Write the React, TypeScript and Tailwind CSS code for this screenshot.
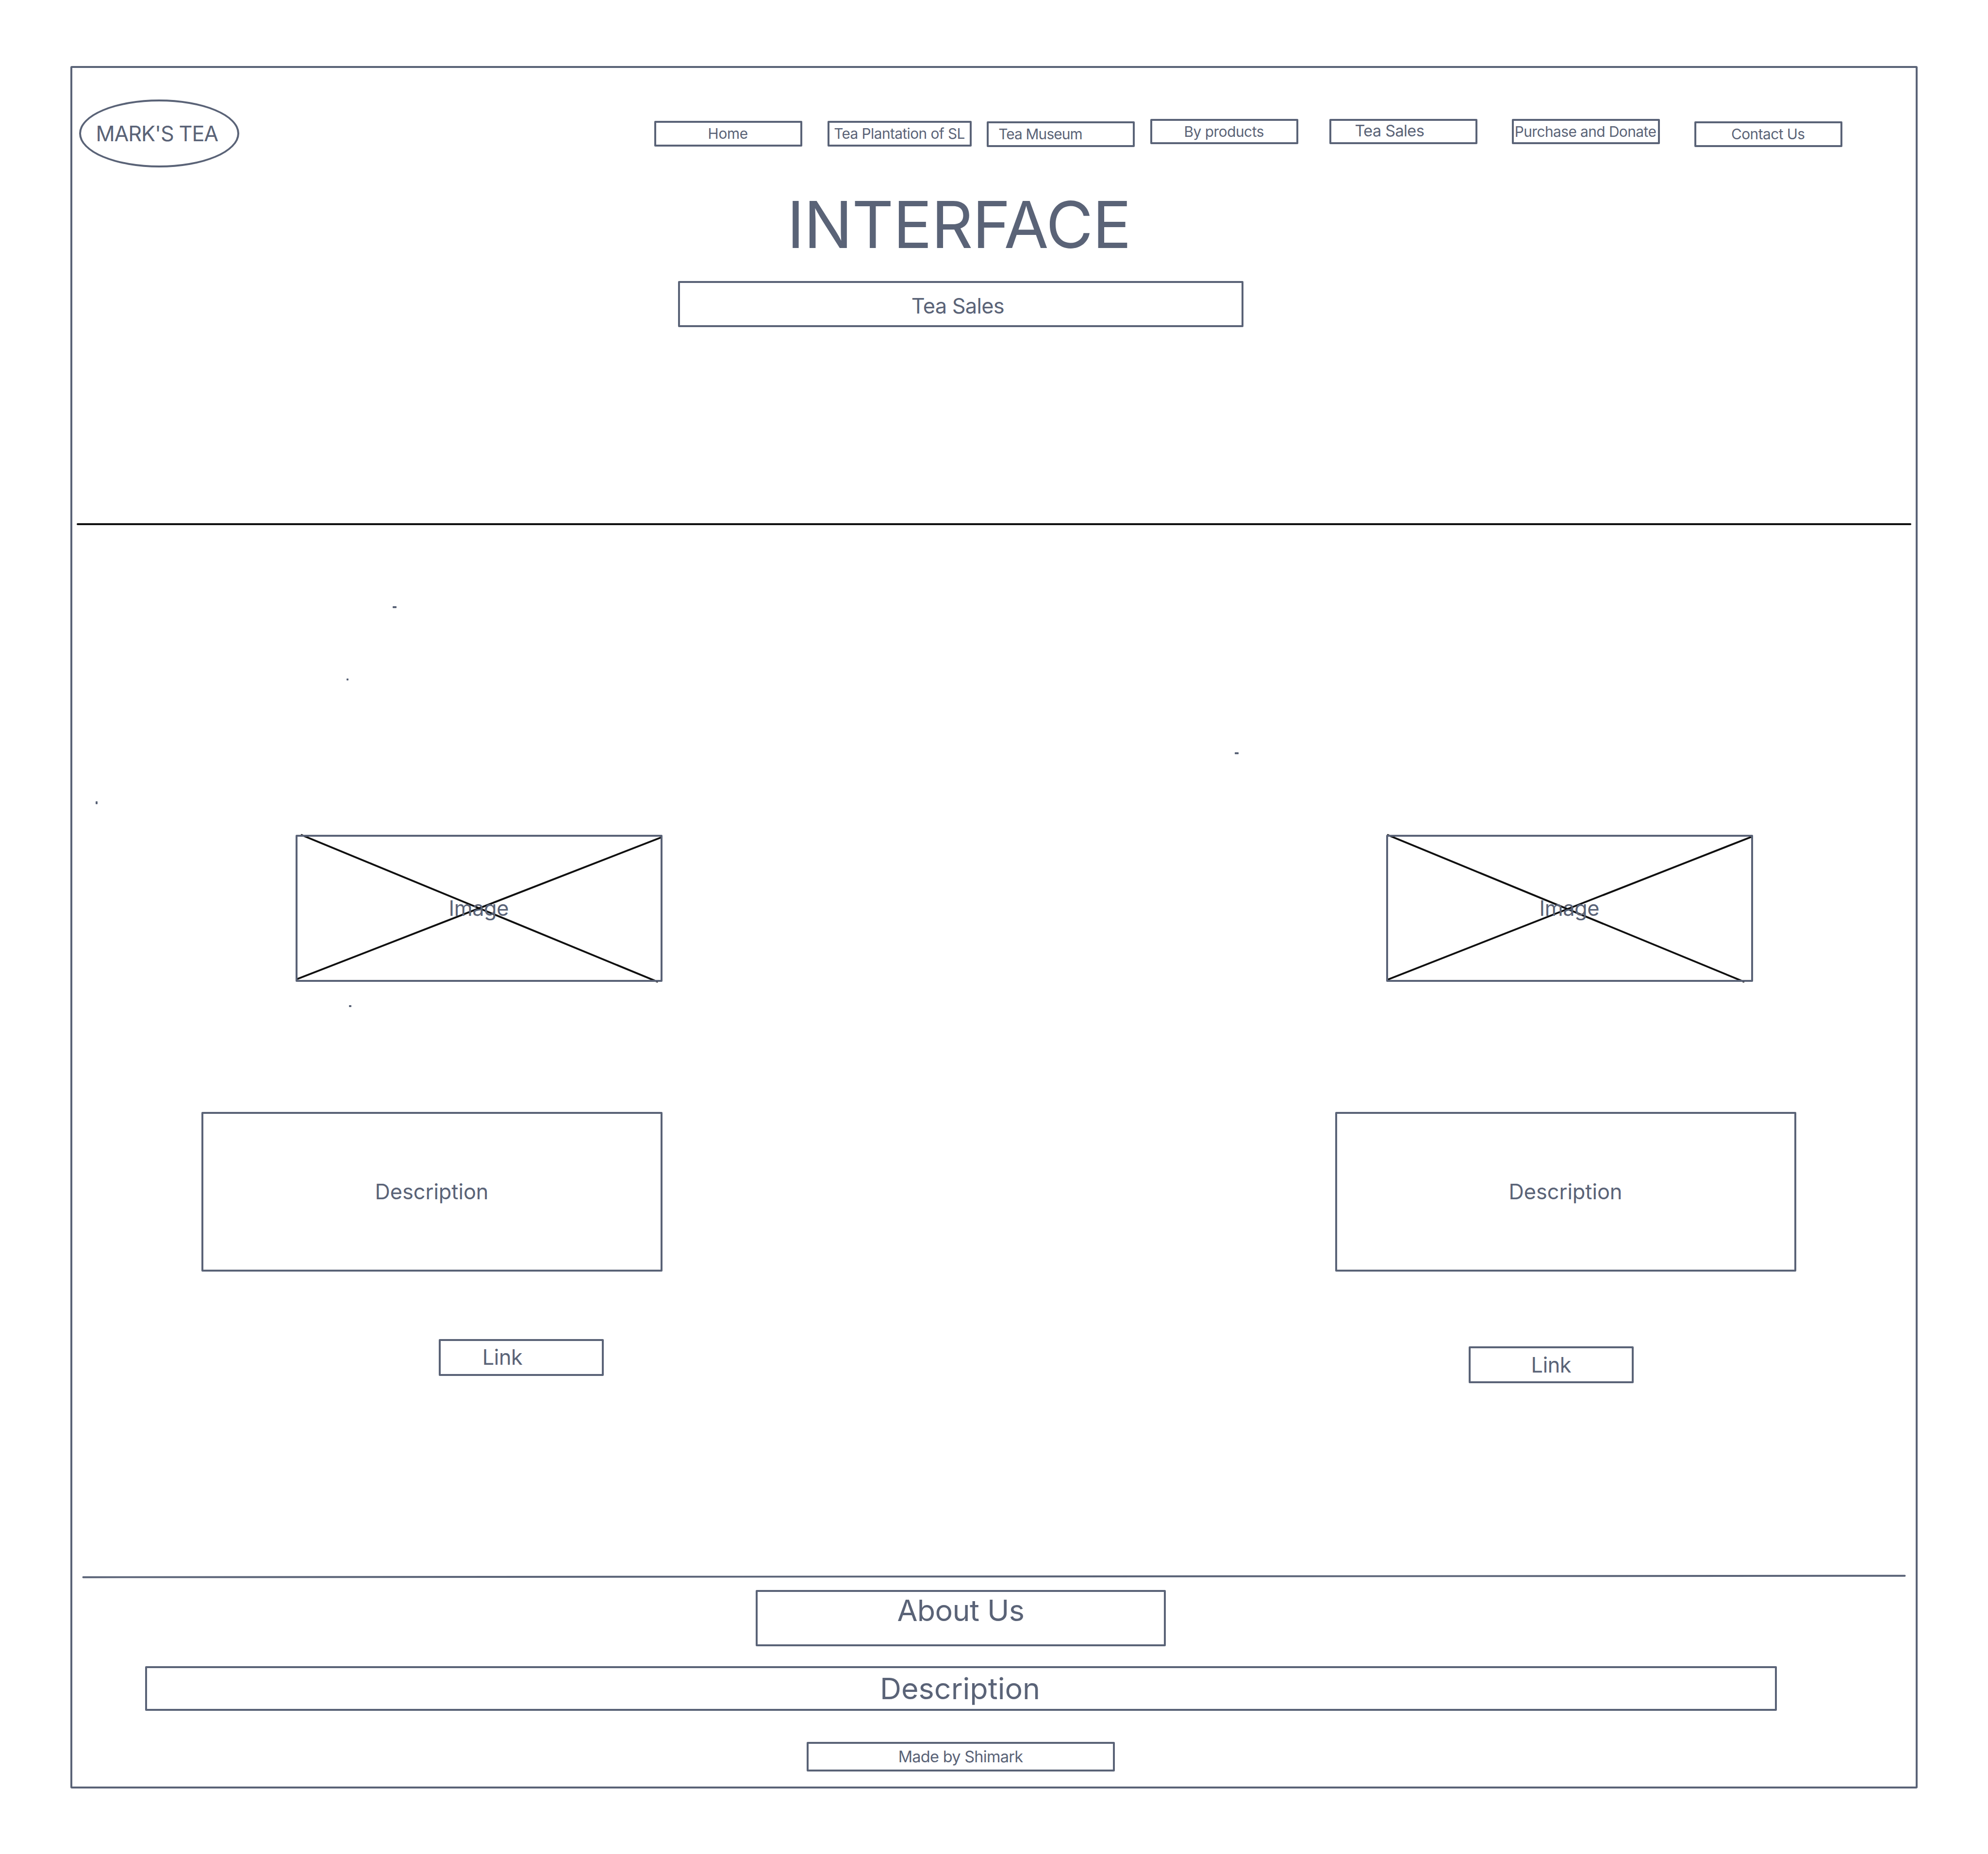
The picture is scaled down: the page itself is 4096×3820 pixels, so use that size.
import type { ReactNode } from "react";

function Box({ className, children }: { className: string; children?: ReactNode }) {
  return (
    <div className={`flex shrink-0 items-start rounded-[2px] border-4 border-[#5a6377] pl-px ${className}`}>
      {children}
    </div>
  );
}

const nav = [
  { label: "Home", box: "mt-[109px] h-[53px] w-[305px]", text: "mt-[7px] ml-[105.6px] text-[29.8px] leading-[30px] tracking-[-0.012em]" },
  { label: "Tea Plantation of SL", box: "mt-[109px] ml-[52px] h-[53px] w-[297px]", text: "mt-[7px] ml-[8.2px] text-[29.8px] leading-[30px] tracking-[-0.019em]" },
  { label: "Tea Museum", box: "mt-[110px] ml-[31px] h-[53px] w-[305px]", text: "mt-[7px] ml-[19.2px] text-[29.8px] leading-[30px] tracking-[-0.028em]" },
  { label: "By products", box: "mt-[105px] ml-[32px] h-[52px] w-[305px]", text: "mt-[7px] ml-[64.6px] text-[29.8px] leading-[30px] tracking-[-0.016em]" },
  { label: "Tea Sales", box: "mt-[105px] ml-[64px] h-[52px] w-[305px]", text: "mt-[4px] ml-[47.4px] text-[32.5px] leading-[33px] tracking-[-0.018em]" },
  { label: "Purchase and Donate", box: "mt-[105px] ml-[71px] h-[52px] w-[305px]", text: "mt-[7px] ml-[0.7px] text-[29.8px] leading-[30px] tracking-[-0.018em]" },
  { label: "Contact Us", box: "mt-[110px] ml-[71px] h-[53px] w-[305px]", text: "mt-[7px] ml-[71px] text-[29.8px] leading-[30px] tracking-[-0.018em]" },
];

type Line = [number, number, number, number];

function Placeholder({ className, lines }: { className: string; lines: Line[] }) {
  return (
    <div className={`relative h-[303px] w-[756px] ${className}`}>
      <svg className="absolute inset-0 overflow-visible" width="756" height="303" viewBox="0 0 756 303">
        {lines.map(([x1, y1, x2, y2], i) => (
          <line key={i} x1={x1} y1={y1} x2={x2} y2={y2} stroke="#101010" strokeWidth="3.8" strokeLinecap="round" />
        ))}
      </svg>
      <Box className="relative h-full w-full">
        <span className="mt-[125px] ml-[310.5px] text-[43.3px] leading-[44px] tracking-[-0.01em]">Image</span>
      </Box>
    </div>
  );
}

function Description({ className }: { className: string }) {
  return (
    <Box className={`mt-[268px] h-[329px] w-[950px] ${className}`}>
      <span className="mt-[138px] ml-[352.6px] text-[43.3px] leading-[44px] tracking-[-0.001em]">Description</span>
    </Box>
  );
}

export default function App() {
  return (
    <div className="h-[3820px] w-[4096px] overflow-hidden bg-white pt-[136px] pl-[145px] font-['Inter',sans-serif] whitespace-nowrap text-[#5a6377]">
      <div className="relative flex h-[3549px] w-[3806px] flex-col rounded-[3px] border-4 border-[#5a6377]">
        <header className="flex flex-col">
          <div className="flex h-[205px] items-start">
            <div className="mt-[65px] ml-[14px] flex h-[140px] w-[330px] shrink-0 items-start rounded-[50%] border-4 border-[#5a6377]">
              <span className="mt-[44px] ml-[30.6px] text-[43.3px] leading-[44px] tracking-[-0.026em]">MARK'S TEA</span>
            </div>
            <nav className="ml-[855px] flex items-start">
              {nav.map((n) => (
                <Box key={n.label} className={n.box}>
                  <span className={n.text}>{n.label}</span>
                </Box>
              ))}
            </nav>
          </div>
          <h1 className="mt-[51px] ml-[1472.6px] text-[133.1px] leading-[133px] tracking-[-0.0085em]">INTERFACE</h1>
          <Box className="mt-[50px] ml-[1248px] h-[95px] w-[1165px]">
            <span className="mt-[25px] ml-[475.8px] text-[43.3px] leading-[44px] tracking-[-0.016em]">Tea Sales</span>
          </Box>
        </header>

        <div className="mt-[404px] ml-[9px] h-[4px] w-[3780px] shrink-0 rounded-full bg-[#101010]" />

        <main className="mt-[638px] grid h-[1130px] shrink-0 grid-cols-[1901px_1fr]">
          <section className="flex flex-col">
            <Placeholder
              className="ml-[460px]"
              lines={[
                [12.5, 0.5, 745, 302.5],
                [2.5, 297.5, 753, 5.5],
              ]}
            />
            <Description className="ml-[266px]" />
            <Box className="mt-[139px] ml-[755px] h-[76px] w-[340px]">
              <span className="mt-[11px] ml-[84.8px] text-[43.3px] leading-[44px] tracking-[-0.01em]">Link</span>
            </Box>
          </section>
          <section className="flex flex-col">
            <Placeholder
              className="ml-[806px]"
              lines={[
                [3.5, 0.5, 736.5, 302.5],
                [3, 298.5, 752, 4.5],
              ]}
            />
            <Description className="ml-[701px]" />
            <Box className="mt-[154px] ml-[976px] h-[76px] w-[340px]">
              <span className="mt-[12px] ml-[123.6px] text-[43.3px] leading-[44px] tracking-[-0.01em]">Link</span>
            </Box>
          </section>
        </main>

        <footer className="mt-[394px] flex flex-col">
          <svg className="ml-[20px] shrink-0" width="3758" height="8" viewBox="0 0 3758 8">
            <line x1="2.5" y1="5.7" x2="3755.5" y2="2.7" stroke="#5a6377" strokeWidth="3.9" strokeLinecap="round" />
          </svg>
          <Box className="mt-[24px] ml-[1408px] h-[116px] w-[845px]">
            <span className="mt-[7px] ml-[286.4px] text-[61px] leading-[62px] tracking-[-0.01em]">About Us</span>
          </Box>
          <Box className="mt-[41px] ml-[150px] h-[92px] w-[3362px]">
            <span className="mt-[11px] ml-[1509px] text-[61px] leading-[62px] tracking-[0em]">Description</span>
          </Box>
          <Box className="mt-[64px] ml-[1513px] h-[61px] w-[635px]">
            <span className="mt-[10px] ml-[183.7px] text-[32.5px] leading-[33px] tracking-[-0.022em]">Made by Shimark</span>
          </Box>
        </footer>

        {/* stray pen marks on the canvas */}
        <i className="absolute top-[1109px] left-[660px] h-[4px] w-[8px] rounded-[1px] bg-[#5a6377]" />
        <i className="absolute top-[1258px] left-[565px] h-[4px] w-[4px] rounded-[1px] bg-[#5a6377]" />
        <i className="absolute top-[1410px] left-[2395px] h-[4px] w-[8px] rounded-[1px] bg-[#5a6377]" />
        <i className="absolute top-[1511px] left-[48px] h-[6px] w-[4px] rounded-[1px] bg-[#5a6377]" />
        <i className="absolute top-[1931px] left-[570px] h-[4px] w-[5px] rounded-[1px] bg-[#5a6377]" />
      </div>
    </div>
  );
}
